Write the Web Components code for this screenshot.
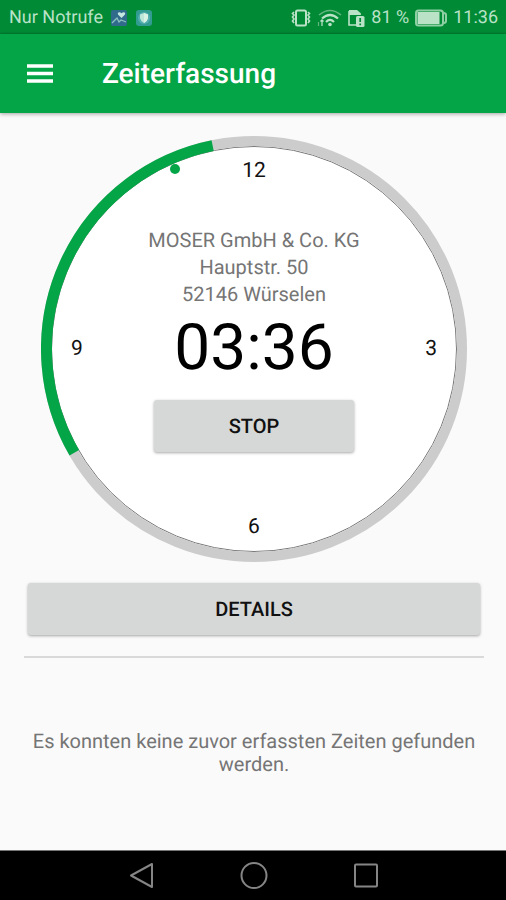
<!DOCTYPE html>
<html lang="de">
<head>
<meta charset="utf-8">
<meta name="viewport" content="width=device-width, initial-scale=1">
<title>Zeiterfassung</title>
<style>
  body {
    margin: 0;
    font-family: Roboto, "Liberation Sans", sans-serif;
    text-rendering: geometricPrecision;
    background: #fafafa;
  }
</style>
</head>
<body>
<time-app></time-app>

<script>
class StatusBar extends HTMLElement {
  constructor() {
    super();
    this.attachShadow({ mode: "open" });
  }

  connectedCallback() {
    this.shadowRoot.innerHTML = `
      <style>
        :host {
          display: flex;
          justify-content: space-between;
          align-items: center;
          height: 34px;
          padding: 2px 8px 0 9px;
          box-sizing: border-box;
          background: linear-gradient(#008a36 94%, #007c31);
          color: #b9e2c6;
          font-size: 18px;
          line-height: 24px;
        }
        .group {
          display: flex;
          align-items: center;
          gap: 8px;
        }
        .right {
          gap: 6px;
        }
        svg {
          display: block;
          flex: none;
        }
      </style>
      <div class="group">
        <span>Nur Notrufe</span>
        <svg width="16" height="16" viewBox="0 0 16 16" aria-hidden="true">
          <rect width="16" height="16" rx="2" fill="#316b8c"/>
          <path d="M10.500 8 L7 4.500 C6 2 9 1.500 10.500 3.300 C12 1.500 15 2 14 4.500 Z" fill="#c4e8e0"/>
          <path d="M1 13 L4 10 L6 8 L8 12 L10 10 L15 12" fill="none" stroke="#8dc3c0" stroke-width="1.300"/>
        </svg>
        <svg width="18" height="18" viewBox="0 0 18 18" aria-hidden="true">
          <rect x="1" y="1" width="16" height="16" rx="3" fill="#329c92"/>
          <circle cx="9" cy="9" r="6" fill="#55aeb0"/>
          <path d="M9 4 L13 5.500 V9 Q12.500 12 9 14 Q5.500 12 5 9 V5.500 Z" fill="#bce6d8"/>
          <path d="M9 4 L13 5.500 V9 Q12.500 12 9 14 Z" fill="#d8f2e4"/>
        </svg>
      </div>
      <div class="group right">
        <svg width="20" height="18" viewBox="0 0 20 18" fill="none" stroke="#b9e2c6" aria-hidden="true">
          <rect x="5" y="1.500" width="10" height="15" rx="1.500" stroke-width="2"/>
          <path d="M3 3 L1.500 4.500 L3 6 L1.500 8 L3 10 L1.500 12 L3 14 M17 3 L18.500 4.500 L17 6 L18.500 8 L17 10 L18.500 12 L17 14" stroke-width="1.600"/>
        </svg>
        <svg width="25" height="18" viewBox="0 0 25 18" fill="none" stroke="#b9e2c6" aria-hidden="true">
          <path d="M2 6 Q13 -3 24 6" stroke="#62b67f" stroke-width="1.600"/>
          <path d="M5 9.500 Q13 2.500 21 9.500" stroke-width="2.200"/>
          <path d="M9 13 Q13 9 17 13" stroke-width="2.200"/>
          <circle cx="13" cy="15.500" r="1.800" fill="#b9e2c6" stroke="none"/>
          <path d="M5 11 V17 M3.500 12.500 L5 11 L6.500 12.500" stroke-width="1.300"/>
          <path d="M1.500 13 V17" stroke="#62b67f" stroke-width="1.200"/>
        </svg>
        <svg width="17" height="18" viewBox="0 0 17 18" aria-hidden="true">
          <path d="M1 2 V16 H8 M1 5 H12 V6" fill="none" stroke="#b9e2c6" stroke-width="1.600"/>
          <path d="M1 1 H9 L12.500 4 V6 H1 Z" fill="#b9e2c6"/>
          <rect x="8" y="7" width="8.500" height="11" rx="1.500" fill="#b9e2c6"/>
          <path d="M12.200 9 V13 M12.200 14.500 V16.300" stroke="#008a36" stroke-width="1.700"/>
        </svg>
        <span>81 %</span>
        <svg width="32" height="18" viewBox="0 0 32 18" aria-hidden="true">
          <rect x="1" y="1.500" width="27" height="15" rx="2.500" fill="none" stroke="#8fcfa4" stroke-width="2"/>
          <rect x="2.500" y="3" width="22" height="12" fill="#b9e2c6"/>
          <path d="M28.500 4 Q31 4 31 6 V12 Q31 14 28.500 14" fill="none" stroke="#8fcfa4" stroke-width="2"/>
        </svg>
        <span>11:36</span>
      </div>
    `;
  }
}

class AppBar extends HTMLElement {
  constructor() {
    super();
    this.attachShadow({ mode: "open" });
  }

  connectedCallback() {
    this.shadowRoot.innerHTML = `
      <style>
        :host {
          display: flex;
          align-items: center;
          gap: 48px;
          height: 79px;
          padding: 1px 26px 0;
          box-sizing: border-box;
          background: #04a547;
          color: #fff;
          box-shadow: 0 1px 4px rgba(0, 0, 0, 0.35);
        }
        button {
          display: block;
          padding: 0;
          border: 0;
          background: none;
          color: inherit;
          cursor: pointer;
        }
        svg {
          display: block;
        }
        h1 {
          margin: 0;
          font-size: 28px;
          line-height: 32px;
          font-weight: 500;
        }
      </style>
      <button type="button" aria-label="Menü">
        <svg width="28" height="20" viewBox="0 0 28 20">
          <path d="M1 2 H27 M1 9.500 H27 M1 17 H27" stroke="currentColor" stroke-width="3.400"/>
        </svg>
      </button>
      <h1><slot></slot></h1>
    `;
  }
}

class FlatButton extends HTMLElement {
  constructor() {
    super();
    this.attachShadow({ mode: "open" });
  }

  connectedCallback() {
    this.shadowRoot.innerHTML = `
      <style>
        :host {
          display: block;
        }
        button {
          display: block;
          width: 100%;
          height: 52px;
          border: 0;
          border-radius: 3px;
          background: #d6d8d7;
          box-shadow: 0 1px 3px rgba(0, 0, 0, 0.35);
          color: #111;
          font: 500 20px/24px Roboto, "Liberation Sans", sans-serif;
          text-rendering: inherit;
          text-transform: uppercase;
          cursor: pointer;
        }
        button:active {
          background: #c4c6c5;
        }
      </style>
      <button type="button"><slot></slot></button>
    `;
  }
}

class ClockDial extends HTMLElement {
  constructor() {
    super();
    this.attachShadow({ mode: "open" });
  }

  // point on a circle around the dial centre, 0 degrees is 12 o'clock
  point(angle, radius) {
    const rad = (angle * Math.PI) / 180;
    return `${213 + radius * Math.sin(rad)} ${213 - radius * Math.cos(rad)}`;
  }

  connectedCallback() {
    const from = this.point(Number(this.getAttribute("from")), 207.5);
    const to = this.point(Number(this.getAttribute("to")), 207.5);

    this.shadowRoot.innerHTML = `
      <style>
        :host {
          display: grid;
          width: 100%;
          max-width: 426px;
          aspect-ratio: 1;
        }
        svg, .face {
          grid-area: 1 / 1;
          width: 100%;
          height: 100%;
        }
        .face {
          display: grid;
          grid-template: auto 1fr auto / auto 1fr auto;
          align-items: center;
          justify-items: center;
          padding: 23px 30px;
          box-sizing: border-box;
          font-size: 21px;
          line-height: 24px;
          color: #111;
        }
        .twelve { grid-area: 1 / 2; }
        .nine { grid-area: 2 / 1; }
        .center {
          grid-area: 2 / 2;
          padding-bottom: 20px;
        }
        .three { grid-area: 2 / 3; }
        .six { grid-area: 3 / 2; }
      </style>
      <svg viewBox="0 0 426 426" aria-hidden="true">
        <circle cx="213" cy="213" r="202.500" fill="#fff" stroke="#777"/>
        <circle cx="213" cy="213" r="208" fill="none" stroke="#ccc" stroke-width="10"/>
        <path d="M${from} A207.500 207.500 0 0 1 ${to}" fill="none" stroke="#04a547" stroke-width="11"/>
        <circle cx="134" cy="33" r="5" fill="#04a547"/>
      </svg>
      <div class="face">
        <span class="twelve">12</span>
        <span class="nine">9</span>
        <div class="center"><slot></slot></div>
        <span class="three">3</span>
        <span class="six">6</span>
      </div>
    `;
  }
}

class NavBar extends HTMLElement {
  constructor() {
    super();
    this.attachShadow({ mode: "open" });
  }

  connectedCallback() {
    this.shadowRoot.innerHTML = `
      <style>
        :host {
          display: flex;
          justify-content: center;
          align-items: center;
          gap: 84px;
          height: 50px;
          padding-left: 2px;
          box-sizing: border-box;
          border-top: 1px solid #777;
          background: #000;
        }
        button {
          padding: 0;
          border: 0;
          background: none;
          color: #858585;
          cursor: pointer;
        }
        svg {
          display: block;
          fill: none;
          stroke: currentColor;
          stroke-width: 2;
          stroke-linejoin: round;
        }
      </style>
      <button type="button" aria-label="Zurück">
        <svg width="28" height="28" viewBox="0 0 28 28"><path d="M24 2 V25 L3 13.500 Z"/></svg>
      </button>
      <button type="button" aria-label="Startseite">
        <svg width="28" height="28" viewBox="0 0 28 28"><circle cx="14" cy="13.500" r="12.500"/></svg>
      </button>
      <button type="button" aria-label="Übersicht">
        <svg width="28" height="28" viewBox="0 0 28 28"><rect x="3" y="2.500" width="22" height="22" rx="1"/></svg>
      </button>
    `;
  }
}

class TimeApp extends HTMLElement {
  constructor() {
    super();
    this.attachShadow({ mode: "open" });
  }

  connectedCallback() {
    this.shadowRoot.innerHTML = `
      <style>
        :host {
          display: flex;
          flex-direction: column;
          min-height: 100vh;
        }
        main {
          flex: 1;
          display: flex;
          flex-direction: column;
          padding: 23px 22px 23px 24px;
        }
        clock-dial {
          align-self: center;
          width: calc(100% - 32px);
        }
        .entry {
          display: flex;
          flex-direction: column;
          align-items: center;
        }
        address {
          font-style: normal;
          font-size: 20px;
          line-height: 27px;
          color: #757575;
          text-align: center;
        }
        time {
          font-size: 64px;
          line-height: 80px;
          color: #000;
        }
        .stop {
          width: 200px;
          margin-top: 12px;
        }
        .details {
          margin: 21px 4px;
        }
        hr {
          width: 100%;
          height: 2px;
          margin: 0;
          border: 0;
          background: #d9d9d9;
        }
        .empty {
          margin: 72px 0 0;
          font-size: 20px;
          line-height: 23px;
          color: #757575;
          text-align: center;
        }
      </style>
      <status-bar></status-bar>
      <app-bar>Zeiterfassung</app-bar>
      <main>
        <clock-dial from="240" to="348.500">
          <div class="entry">
            <address>MOSER GmbH &amp; Co. KG<br>Hauptstr. 50<br>52146 Würselen</address>
            <time>03:36</time>
            <flat-button class="stop">Stop</flat-button>
          </div>
        </clock-dial>
        <flat-button class="details">Details</flat-button>
        <hr>
        <p class="empty">Es konnten keine zuvor erfassten Zeiten gefunden werden.</p>
      </main>
      <nav-bar></nav-bar>
    `;
  }
}

customElements.define("status-bar", StatusBar);
customElements.define("app-bar", AppBar);
customElements.define("flat-button", FlatButton);
customElements.define("clock-dial", ClockDial);
customElements.define("nav-bar", NavBar);
customElements.define("time-app", TimeApp);
</script>
</body>
</html>
